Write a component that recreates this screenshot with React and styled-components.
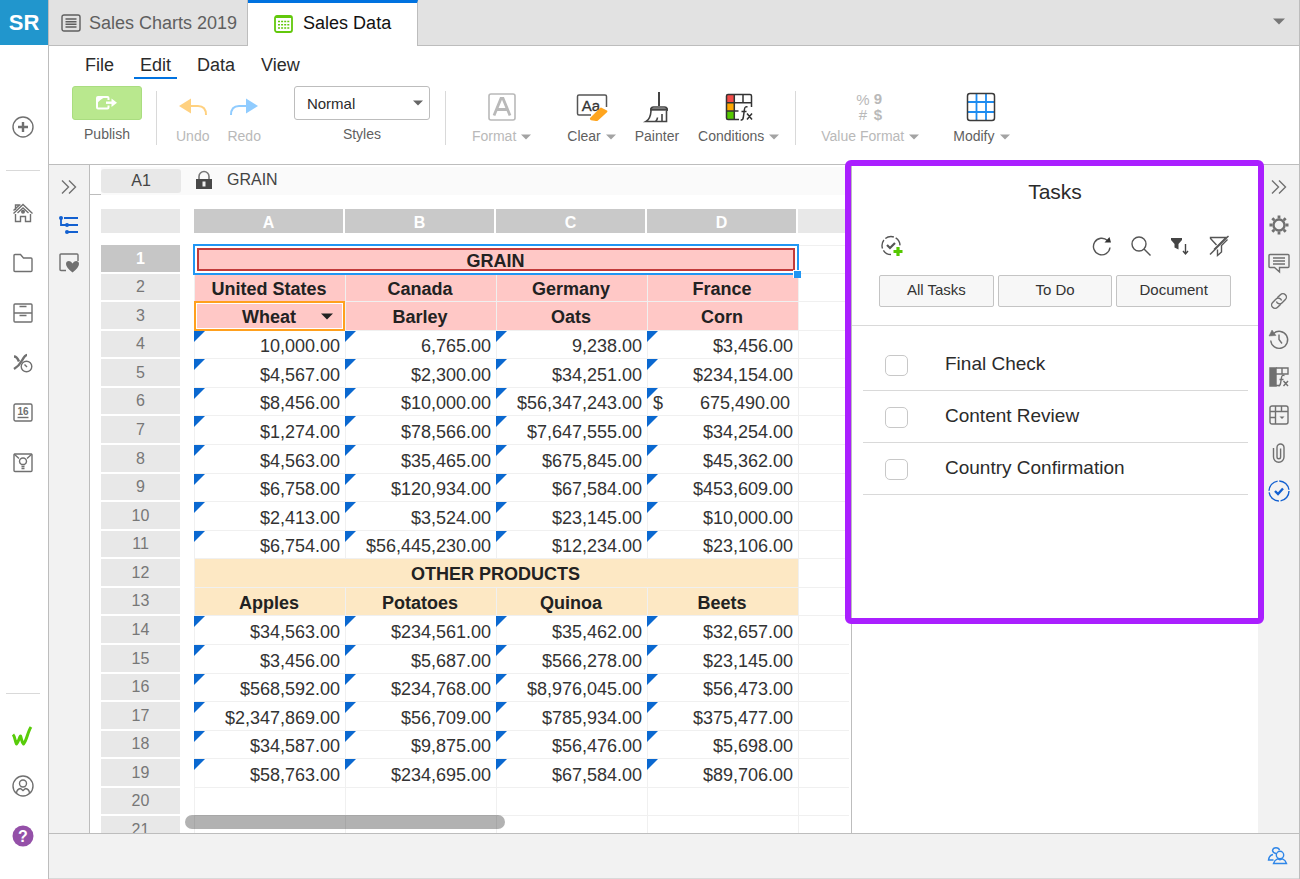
import React from "react";
import styled, { createGlobalStyle, css } from "styled-components";

/* =============== Theme =============== */
const colors = {
  text: "#2b2b2b",
  muted: "#5f5f5f",
  icon: "#707070",
  disabled: "#b9b9b9",
  line: "#bdbdbd",
  lightLine: "#d9d9d9",
  strip: "#f2f2f2",
  tabBar: "#e2e2e2",
  blue: "#0072e0",
  select: "#2196f3",
  pink: "#ffc8c6",
  cream: "#fde8c4",
  purple: "#aa1fff",
};

const GlobalStyle = createGlobalStyle`
  *, *::before, *::after { box-sizing: border-box; }
  body {
    margin: 0;
    background: #fff;
    color: ${colors.text};
    font-family: "Liberation Sans", Arial, sans-serif;
  }
  button, input, select { font-family: inherit; }
`;

/* =============== Shell =============== */
const Shell = styled.div`
  display: flex;
  height: 100vh;
  min-height: 600px;
  overflow: hidden;
`;

const Rail = styled.nav`
  display: flex;
  flex-direction: column;
  flex: 0 0 49px;
  align-items: flex-start;
  border-right: 1px solid ${colors.line};
  padding-bottom: 18px;
`;

const Logo = styled.a`
  display: grid;
  place-items: center;
  align-self: stretch;
  height: 45px;
  background: #2196cd;
  color: #fff;
  font-size: 22px;
  font-weight: 700;
  text-decoration: none;
`;

const RailButton = styled.button`
  display: grid;
  place-items: center;
  width: 46px;
  height: 50px;
  padding: 0;
  border: 0;
  background: none;
  color: ${colors.icon};
`;

const AddArea = styled.div`
  padding: 57px 0 18px;
`;

const RailLine = styled.hr`
  width: 34px;
  margin: 0 0 17px 6px;
  border: 0;
  border-top: 1px solid ${colors.lightLine};
`;

const Spacer = styled.div`
  flex: 1;
`;

const Main = styled.div`
  display: flex;
  flex-direction: column;
  flex: 1;
  min-width: 0;
  border-right: 1px solid ${colors.line};
`;

const Icon = styled.svg`
  display: block;
  fill: none;
  stroke: currentColor;
  stroke-width: ${(p) => p.$weight || 1.4};
  overflow: visible;
`;

/* =============== Tabs =============== */
const TabBar = styled.div`
  display: flex;
  flex: 0 0 46px;
  background: ${colors.tabBar};
  box-shadow: inset 0 -1px 0 ${colors.line};
`;

const Tab = styled.button`
  display: flex;
  align-items: center;
  gap: 8px;
  padding: 0 10px 0 12px;
  border: 0;
  border-right: 1px solid ${colors.line};
  background: none;
  color: ${colors.muted};
  font-size: 18px;

  ${(p) =>
    p.$active &&
    css`
      gap: 10px;
      padding: 0 26px 2px;
      border-top: 3px solid ${colors.blue};
      background: #fff;
      color: #111;
    `}
`;

const TabMenu = styled.button`
  margin-left: auto;
  padding: 0 14px 2px;
  border: 0;
  background: none;
  color: #777;
`;

/* =============== Ribbon =============== */
const Ribbon = styled.header`
  flex: 0 0 119px;
  border-bottom: 1px solid ${colors.line};
`;

const Menus = styled.div`
  display: flex;
  gap: 14px;
  padding-left: 30px;
`;

const Menu = styled.button`
  height: 33px;
  padding: 8px 6px 0;
  border: 0;
  border-bottom: 2px solid ${(p) => (p.$active ? colors.blue : "transparent")};
  background: none;
  color: ${colors.text};
  font-size: 18px;
`;

const Tools = styled.div`
  display: flex;
  align-items: flex-start;
  padding: 7px 0 0 23px;
`;

const Divider = styled.span`
  width: 1px;
  height: 54px;
  margin: 5px ${(p) => p.$after}px 0 ${(p) => p.$before}px;
  background: ${colors.lightLine};
`;

const Group = styled.div`
  display: flex;
  gap: ${(p) => p.$gap}px;
`;

const Labelled = styled.div`
  display: flex;
  flex-direction: column;
  align-items: center;
  gap: 5px;
  color: ${colors.muted};
  font-size: 14px;
  line-height: 18px;
`;

const PublishButton = styled.button`
  display: grid;
  place-items: center;
  width: 70px;
  height: 34px;
  padding: 0;
  border: 1px solid #aadd80;
  border-radius: 3px;
  background: #b9e88e;
  color: #fff;
`;

const SelectBox = styled.div`
  display: grid;
  grid-template-columns: 1fr 16px;
  align-items: center;
  width: 136px;
  height: 34px;
  border: 1px solid ${colors.line};
  border-radius: 3px;
  color: #666;
`;

const StyleSelect = styled.select`
  grid-area: 1 / 1 / 2 / 3;
  width: 100%;
  height: 100%;
  padding: 0 12px;
  border: 0;
  appearance: none;
  background: none;
  color: ${colors.text};
  font-size: 15px;
`;

const SelectCaret = styled.span`
  grid-area: 1 / 2;
  pointer-events: none;
`;

const Tool = styled.button`
  display: flex;
  flex-direction: column;
  align-items: center;
  padding: 0;
  border: 0;
  background: none;
  color: ${(p) => (p.disabled ? colors.disabled : colors.muted)};
  font-size: 14px;
  line-height: 18px;
`;

const ToolIcon = styled.span`
  display: grid;
  place-items: center;
  height: 41px;
`;

const ToolLabel = styled.span`
  display: flex;
  align-items: center;
  gap: 5px;
`;

const ToolCaret = styled.span`
  padding-top: 2px;
  color: #a3a3a3;
`;

/* =============== Workspace =============== */
const Workspace = styled.div`
  display: flex;
  flex: 1;
  min-height: 0;
`;

const SideStrip = styled.aside`
  display: flex;
  flex-direction: column;
  align-items: center;
  flex: 0 0 41px;
  padding-top: 3px;
  background: ${colors.strip};
  border-right: ${(p) => (p.$lined ? `1px solid ${colors.line}` : 0)};
`;

const StripButton = styled.button`
  display: grid;
  place-items: center;
  width: 40px;
  height: 38px;
  padding: 0;
  border: 0;
  background: none;
  color: ${(p) => (p.$active ? "#1260d0" : colors.icon)};
`;

const SheetArea = styled.main`
  position: relative;
  display: flex;
  flex-direction: column;
  flex: 1;
  min-width: 0;
  overflow: hidden;
`;

const FormulaBar = styled.div`
  display: flex;
  flex: 0 0 30px;
  margin-bottom: 14px;
`;

const FormulaStub = styled.div`
  flex: 0 0 11px;
  border-bottom: 1px solid ${colors.line};
`;

const FormulaBody = styled.div`
  display: flex;
  align-items: center;
  flex: 1;
  min-width: 0;
  margin-top: 2px;
  background: #fafafa;
  color: #444;
  font-size: 16px;
`;

const CellName = styled.span`
  width: 80px;
  margin-right: 15px;
  border-radius: 3px;
  background: #e8e8e8;
  line-height: 24px;
  text-align: center;
`;

const FormulaInput = styled.input`
  flex: 1;
  min-width: 0;
  padding: 0 0 2px;
  margin-left: 15px;
  border: 0;
  background: none;
  color: #444;
  font-size: 16px;
`;

const SheetScroll = styled.div`
  flex: 1;
  min-height: 0;
  margin: 0 2px 0 11px;
  overflow: hidden;
`;

const ScrollThumb = styled.div`
  position: absolute;
  left: 95px;
  bottom: 4px;
  width: 320px;
  height: 14px;
  border-radius: 7px;
  background: rgba(0, 0, 0, 0.3);
`;

/* =============== Grid =============== */
const Grid = styled.table`
  width: 100%;
  table-layout: fixed;
  border-collapse: separate;
  border-spacing: 0;
  font-size: 18px;
  line-height: 20px;

  tbody tr {
    height: 29px;
  }

  tbody tr:nth-child(7n + 2),
  tbody tr:nth-child(7n + 4),
  tbody tr:nth-child(7n + 6) {
    height: 28px;
  }
`;

const Col = styled.col`
  width: ${(p) => (p.$width ? `${p.$width}px` : "auto")};
`;

const ColumnHead = styled.th`
  height: 36px;
  padding: 0 2px 12px 0;
  background: ${(p) => (p.$on ? "#c9c9c9" : "#e8e8e8")};
  background-clip: content-box;
  color: #fff;
  font-size: 16px;
  vertical-align: bottom;
`;

const Corner = styled(ColumnHead)`
  padding-right: 14px;
`;

const RowHead = styled.th`
  padding: 0 14px 2px 0;
  background: ${(p) => (p.$on ? "#c6c6c6" : "#e8e8e8")};
  background-clip: content-box;
  color: ${(p) => (p.$on ? "#fff" : "#777")};
  font-size: 16px;
  font-weight: ${(p) => (p.$on ? 700 : 400)};
`;

const fills = {
  pink: css`
    background: ${colors.pink};
  `,
  cream: css`
    background: ${colors.cream};
  `,
};

const Cell = styled.td`
  position: relative;
  padding: 3px 5px 0;
  border: 0 solid #f0f0f0;
  border-width: 0 0 1px 1px;
  text-align: right;
  white-space: nowrap;
  color: #333;
  ${(p) => fills[p.$fill]}

  tr:first-child > & {
    border-top-width: 1px;
  }
`;

const TitleCell = styled(Cell)`
  padding: 2px 6px 0 4px;
  text-align: center;
  font-weight: 700;
  color: #222;
`;

const ValueCell = styled(Cell)`
  /* comment / formula marker */
  &::before {
    content: "";
    position: absolute;
    top: 0;
    left: -1px;
    width: 11px;
    height: 11px;
    background: #0a68d0;
    clip-path: polygon(0 0, 100% 0, 0 100%);
  }
`;

const Accounting = styled.span`
  display: flex;
  justify-content: space-between;
  padding-right: 3px;
`;

const Selection = styled.span`
  position: absolute;
  inset: -2px -1px -2px -2px;
  border: 2px solid ${colors.select};
  box-shadow: inset 0 0 0 2px #fff;
  z-index: 1;

  &::before {
    content: "";
    position: absolute;
    inset: 2px;
    border: 2px solid #c23b3b;
  }

  &::after {
    content: "";
    position: absolute;
    right: -4px;
    bottom: -5px;
    width: 8px;
    height: 8px;
    border: 1px solid #fff;
    border-width: 1px 0 0 1px;
    background: ${colors.select};
  }
`;

const Highlight = styled.span`
  position: absolute;
  inset: -1px 0 -1px -1px;
  border: 2px solid #ffa01e;
  box-shadow: inset 0 0 0 1px #fff;
  z-index: 1;
`;

const CellMenu = styled.button`
  position: absolute;
  top: 4px;
  right: 8px;
  z-index: 2;
  padding: 7px 4px;
  border: 0;
  background: none;
  color: #222;
`;

/* =============== Tasks =============== */
const TaskPanel = styled.section`
  position: relative;
  flex: 0 0 407px;
  border-left: 1px solid ${colors.line};
  background: #fff;
`;

const PanelFrame = styled.div`
  position: absolute;
  top: -5px;
  left: -7px;
  right: -6px;
  height: 464px;
  border: 6px solid ${colors.purple};
  border-radius: 6px;
  pointer-events: none;
  z-index: 3;
`;

const PanelTitle = styled.h2`
  margin: 0;
  padding-top: 15px;
  font-size: 21px;
  font-weight: 400;
  line-height: 24px;
  text-align: center;
`;

const PanelTools = styled.div`
  display: flex;
  align-items: center;
  gap: 14px;
  padding: 29px 27px 0;
`;

const PanelTool = styled.button`
  display: grid;
  place-items: center;
  width: 25px;
  height: 26px;
  padding: 0;
  border: 0;
  background: none;
  color: #555;

  &:first-child {
    margin-right: auto;
  }
`;

const Filters = styled.div`
  display: flex;
  gap: 4px;
  padding: 16px 27px 18px;
  border-bottom: 1px solid ${colors.lightLine};
`;

const FilterButton = styled.button`
  flex: 1;
  height: 32px;
  padding: 0 0 3px;
  border: 1px solid #c4c4c4;
  border-radius: 2px;
  background: #f7f7f7;
  color: #333;
  font-size: 15px;
`;

const TaskList = styled.ul`
  margin: 0;
  padding: 13px 10px 0 11px;
  list-style: none;
`;

const TaskRow = styled.li`
  display: flex;
  align-items: center;
  height: 52px;
  padding: 0 0 2px 22px;
  border-bottom: 1px solid ${colors.lightLine};
`;

const TaskCheck = styled.input`
  appearance: none;
  width: 23px;
  height: 21px;
  margin: 3px 37px 0 0;
  border: 1px solid #c8c8c8;
  border-radius: 5px;
  background: #fff;
`;

const TaskLabel = styled.label`
  font-size: 19px;
  line-height: 24px;
`;

const StatusBar = styled.footer`
  display: flex;
  justify-content: flex-end;
  align-items: center;
  flex: 0 0 46px;
  padding-right: 11px;
  border-top: 1px solid ${colors.line};
  border-bottom: 1px solid ${colors.lightLine};
  background: ${colors.strip};
  color: #2f86e8;
`;

/* =============== Icons =============== */
const Caret = ({ w = 10 }) => (
  <Icon width={w} height={w * 0.6} viewBox="0 0 10 6" aria-hidden>
    <path d="M0 0.5h10L5 5.5z" fill="currentColor" stroke="none" />
  </Icon>
);

const Chevrons = () => (
  <Icon width="16" height="16" viewBox="0 0 16 16" aria-hidden>
    <path d="M1 1.5l6.5 6.5L1 14.5M8 1.5l6.5 6.5L8 14.5" />
  </Icon>
);

const railIcons = [
  {
    label: "Home",
    art: (
      <>
        <path d="M.5 10.500L10 1.500l9.500 9" />
        <path d="M2.500 11v7.500h5v-5h5v5h5V11" />
        <path d="M4.500 10L10 5l5.500 5M2.500 7V2h5M.5 7.500L6.500 2" />
        <circle cx="10" cy="8.700" r="1.300" fill="currentColor" />
      </>
    ),
  },
  { label: "Files", art: <path d="M1 17.500V2.500q0-1 1-1h5.500l3 3.500H18q1 0 1 1v11.500q0 1-1 1H2q-1 0-1-1z" /> },
  {
    label: "Records",
    art: (
      <>
        <rect x="1" y="1" width="18" height="18" rx="1" />
        <path d="M1 10h18M6.500 3.500h7M6.500 12.500h7" />
      </>
    ),
  },
  {
    label: "Scheduled",
    art: (
      <>
        <path d="M1 3.500q3 0 5 5M14 2q-2 0-5 5.500T1 16" strokeWidth="2.400" />
        <circle cx="13.500" cy="13.500" r="5.300" fill="#fff" />
        <path d="M11.500 11.500l2.500 2.500" />
      </>
    ),
  },
  {
    label: "Calendar",
    art: (
      <>
        <rect x="1" y="1" width="18" height="17" rx="1.500" />
        <path d="M4.500 14.500h11" />
        <text x="10" y="12" fontSize="10" fontWeight="700" textAnchor="middle" fill="currentColor" stroke="none">16</text>
      </>
    ),
  },
  {
    label: "Insights",
    art: (
      <>
        <rect x="1" y="1" width="18" height="17.500" rx="1" />
        <path d="M1 1l5 4.500M19 1l-5 4.500M8.500 13.500h3M8.500 15.500h3" />
        <path d="M8.500 11.500q-2-1.200-2-3a3.500 3.500 0 0 1 7 0q0 1.800-2 3z" />
      </>
    ),
  },
];

const stripIcons = [
  { label: "Collapse", art: <path d="M3 3.500l6.500 6.500L3 16.500M10 3.500l6.500 6.500-6.500 6.500" /> },
  {
    label: "Settings",
    art: (
      <>
        <circle cx="10" cy="10" r="5.500" strokeWidth="2.400" />
        <path d="M10 .5v3M10 16.500v3M.5 10h3M16.500 10h3M3.300 3.300l2 2M14.700 14.700l2 2M16.700 3.300l-2 2M5.300 14.700l-2 2" strokeWidth="2.800" />
      </>
    ),
  },
  {
    label: "Comments",
    art: (
      <>
        <path d="M1 1.500h18q1 0 1 1v11q0 1-1 1h-8.500V19l-5-4.500H1q-1 0-1-1v-11q0-1 1-1z" />
        <path d="M4 5h12M4 8h12M4 11h12" />
      </>
    ),
  },
  {
    label: "Links",
    art: (
      <g transform="rotate(-45 10 10)">
        <path d="M9 13.500H4.500a3.500 3.500 0 0 1 0-7H9a3.500 3.500 0 0 1 3.200 5" />
        <path d="M11 6.500h4.500a3.500 3.500 0 0 1 0 7H11a3.500 3.500 0 0 1-3.200-5" />
      </g>
    ),
  },
  {
    label: "History",
    art: (
      <>
        <path d="M4.500 4.500a8.500 8.500 0 1 1-2.800 7" />
        <path d="M0 7L3 1l4 5.500z" fill="currentColor" strokeWidth="0.500" />
        <path d="M10 5.500v5l3 4" />
      </>
    ),
  },
  {
    label: "Formulas",
    art: (
      <>
        <path d="M1 1h6v18H1z" fill="currentColor" />
        <path d="M7 1h12v6H7M13 1v6M7 18.500h4" />
        <path d="M15.500 8.500q-2.500-1-3 2l-1 6q-.5 2.500-2 2M10.500 12.500h4M14.500 14l4.500 5M19 14l-4.500 5" />
      </>
    ),
  },
  {
    label: "Sheet fields",
    art: (
      <>
        <rect x="1" y="1" width="18" height="18" rx="2" />
        <path d="M1 6.500h18M6.500 1v18M12.500 1v5.500M1 12.500h5.500" />
        <path d="M10.500 11.500h5l-2.500 2.500z" fill="currentColor" stroke="none" />
      </>
    ),
  },
  {
    label: "Attachments",
    art: <path d="M4.500 5v9a5 5 0 0 0 10.500 0V4.500a3.500 3.500 0 0 0-7 0v9.500a1.800 1.800 0 0 0 3.600 0V5.500" />,
  },
  {
    label: "Tasks",
    active: true,
    art: (
      <>
        <circle cx="10" cy="10" r="10" strokeDasharray="14 1.700" />
        <path d="M6 10l3 3 5-5.500" strokeWidth="2.400" />
      </>
    ),
  },
];

/* =============== Data =============== */
const columns = ["A", "B", "C", "D"];

const rows = [
  { type: "title", fill: "pink", selected: true, text: "GRAIN" },
  { type: "heads", fill: "pink", cells: ["United States", "Canada", "Germany", "France"] },
  { type: "heads", fill: "pink", cells: ["Wheat", "Barley", "Oats", "Corn"], menu: true },
  { cells: ["10,000.00", "6,765.00", "9,238.00", "$3,456.00"] },
  { cells: ["$4,567.00", "$2,300.00", "$34,251.00", "$234,154.00"] },
  { cells: ["$8,456.00", "$10,000.00", "$56,347,243.00", ["$", "675,490.00"]] },
  { cells: ["$1,274.00", "$78,566.00", "$7,647,555.00", "$34,254.00"] },
  { cells: ["$4,563.00", "$35,465.00", "$675,845.00", "$45,362.00"] },
  { cells: ["$6,758.00", "$120,934.00", "$67,584.00", "$453,609.00"] },
  { cells: ["$2,413.00", "$3,524.00", "$23,145.00", "$10,000.00"] },
  { cells: ["$6,754.00", "$56,445,230.00", "$12,234.00", "$23,106.00"] },
  { type: "title", fill: "cream", text: "OTHER PRODUCTS" },
  { type: "heads", fill: "cream", cells: ["Apples", "Potatoes", "Quinoa", "Beets"] },
  { cells: ["$34,563.00", "$234,561.00", "$35,462.00", "$32,657.00"] },
  { cells: ["$3,456.00", "$5,687.00", "$566,278.00", "$23,145.00"] },
  { cells: ["$568,592.00", "$234,768.00", "$8,976,045.00", "$56,473.00"] },
  { cells: ["$2,347,869.00", "$56,709.00", "$785,934.00", "$375,477.00"] },
  { cells: ["$34,587.00", "$9,875.00", "$56,476.00", "$5,698.00"] },
  { cells: ["$58,763.00", "$234,695.00", "$67,584.00", "$89,706.00"] },
  { type: "empty", cells: ["", "", "", ""] },
  { type: "empty", cells: ["", "", "", ""] },
];

const tasks = ["Final Check", "Content Review", "Country Confirmation"];

/* =============== Components =============== */
const LeftRail = () => (
  <Rail aria-label="Workspace">
    <Logo href="#home">SR</Logo>
    <AddArea>
      <RailButton aria-label="Create">
        <Icon width="22" height="22" viewBox="0 0 22 22">
          <circle cx="11" cy="11" r="10" />
          <path d="M11 6v10M6 11h10" strokeWidth="2.400" />
        </Icon>
      </RailButton>
    </AddArea>
    <RailLine />
    {railIcons.map(({ label, art }) => (
      <RailButton key={label} aria-label={label}>
        <Icon width="20" height="20" viewBox="0 0 20 20">{art}</Icon>
      </RailButton>
    ))}
    <Spacer />
    <RailLine />
    <RailButton aria-label="Product home">
      <Icon width="22" height="20" viewBox="0 0 22 20">
        <path d="M1 8.500c2 2 2 7 3.500 9.500 2-2 2.500-6 4-8 1 2 1 6 3 8 3.500-4 4-12 7.500-17" stroke="#58cc0a" strokeWidth="3" strokeLinejoin="round" />
      </Icon>
    </RailButton>
    <RailButton aria-label="Account">
      <Icon width="22" height="22" viewBox="0 0 22 22">
        <circle cx="11" cy="11" r="10" />
        <circle cx="11" cy="8.500" r="3.500" />
        <path d="M4.500 18q.5-4 4-4.500l2.500 2 2.500-2q3.500.5 4 4.500" />
      </Icon>
    </RailButton>
    <RailButton aria-label="Help">
      <Icon width="22" height="22" viewBox="0 0 22 22">
        <circle cx="11" cy="11" r="10.500" fill="#9450a8" stroke="none" />
        <text x="11" y="16.500" fontSize="16" fontWeight="700" textAnchor="middle" fill="#fff" stroke="none">?</text>
      </Icon>
    </RailButton>
  </Rail>
);

const Tabs = () => (
  <TabBar role="tablist">
    <Tab role="tab">
      <Icon width="20" height="18" viewBox="0 0 20 18">
        <rect x="1" y="1" width="18" height="16" rx="2" />
        <path d="M4.500 5h11M4.500 7.700h11M4.500 10.300h11M4.500 13h11" />
      </Icon>
      Sales Charts 2019
    </Tab>
    <Tab role="tab" aria-selected $active>
      <Icon width="19" height="18" viewBox="0 0 19 18" $weight={1.8}>
        <rect x="1" y="1" width="17" height="16" rx="2" stroke="#62c80c" />
        <path d="M1 2h17" stroke="#62c80c" strokeWidth="2" />
        <path d="M4 6.500h11.500M4 9.700h11.500M4 13h11.500" stroke="#62c80c" strokeWidth="1.500" strokeDasharray="2 1.100" />
      </Icon>
      Sales Data
    </Tab>
    <TabMenu aria-label="More tabs">
      <Caret w={12} />
    </TabMenu>
  </TabBar>
);

const RibbonTool = ({ label, caret, disabled, children }) => (
  <Tool disabled={disabled}>
    <ToolIcon>{children}</ToolIcon>
    <ToolLabel>
      {label}
      {caret && (
        <ToolCaret>
          <Caret />
        </ToolCaret>
      )}
    </ToolLabel>
  </Tool>
);

const RibbonBar = () => (
  <Ribbon>
    <Menus>
      {["File", "Edit", "Data", "View"].map((name) => (
        <Menu key={name} $active={name === "Edit"}>{name}</Menu>
      ))}
    </Menus>
    <Tools>
      <Labelled>
        <PublishButton aria-labelledby="publish-label">
          <Icon width="22" height="14" viewBox="0 0 22 14">
            <path d="M12.500 4V2q0-1-1-1H2Q1 1 1 2v9.500q0 1 1 1h9.500q1 0 1-1V9.500" strokeWidth="2" />
            <path d="M1 12V7.500q4-5 8-6H1z" fill="currentColor" stroke="none" />
            <path d="M10 6.700h7" strokeWidth="2.400" />
            <path d="M15.500 2.500L21 6.700l-5.500 4.300z" fill="currentColor" stroke="none" />
          </Icon>
        </PublishButton>
        <span id="publish-label">Publish</span>
      </Labelled>
      <Divider $before={14} $after={19} />
      <Group $gap={33}>
        <Group $gap={18}>
          <RibbonTool label="Undo" disabled>
            <Icon width="30" height="20" viewBox="0 0 30 20" $weight={2}>
              <path d="M1 9L13 1.500v15z" fill="#ffd180" stroke="none" />
              <path d="M12 9h8q8 0 8 9" stroke="#ffd180" />
            </Icon>
          </RibbonTool>
          <RibbonTool label="Redo" disabled>
            <Icon width="30" height="20" viewBox="0 0 30 20" $weight={2}>
              <path d="M29 9L17 1.500v15z" fill="#90ccff" stroke="none" />
              <path d="M18 9h-8q-8 0-8 9" stroke="#90ccff" />
            </Icon>
          </RibbonTool>
        </Group>
        <Labelled>
          <SelectBox>
            <StyleSelect id="cell-style" defaultValue="Normal">
              <option>Normal</option>
              <option>Heading</option>
            </StyleSelect>
            <SelectCaret>
              <Caret />
            </SelectCaret>
          </SelectBox>
          <label htmlFor="cell-style">Styles</label>
        </Labelled>
      </Group>
      <Divider $before={15} $after={26} />
      <Group $gap={36}>
        <RibbonTool label="Format" caret disabled>
          <Icon width="28" height="28" viewBox="0 0 28 28" $weight={1.6}>
            <rect x="1" y="1" width="26" height="26" rx="2" />
            <path d="M6 22.500L13 5.500h2l7 17M8.500 16.500h11" strokeWidth="2.800" />
          </Icon>
        </RibbonTool>
        <Group $gap={19}>
          <RibbonTool label="Clear" caret>
            <Icon width="32" height="28" viewBox="0 0 32 28" $weight={1.5}>
              <path d="M15 22H3q-1.500 0-1.500-1.500v-17Q1.500 2 3 2h26q1.500 0 1.500 1.500V14" stroke="#555" />
              <text x="15" y="17.500" fontSize="15" textAnchor="middle" fill="#333" stroke="#333" strokeWidth="0.300">Aa</text>
              <path d="M15 24l9-9q1-.8 2 0l5 2.500q1 .8 0 1.800l-9 8.200q-.8.700-2 .5l-5-.8q-2.300-1.200 0-3.200z" fill="#ffa51e" stroke="none" />
            </Icon>
          </RibbonTool>
          <RibbonTool label="Painter">
            <Icon width="24" height="32" viewBox="0 0 24 32" $weight={1.6}>
              <path d="M14 1v14" stroke="#444" strokeWidth="2" />
              <path d="M6 20v-1.500Q6 16 8.500 16h11q2.500 0 2.500 2.500V20" stroke="#444" />
              <path d="M5 18.500h18" stroke="#444" strokeWidth="2.400" />
              <path d="M6 20q-.5 8-5 10.500h20.500V20M10.500 30.500q2-2 2-4M17 30v-7" stroke="#444" />
            </Icon>
          </RibbonTool>
          <RibbonTool label="Conditions" caret>
            <Icon width="28" height="28" viewBox="0 0 28 28" $weight={1.5}>
              <path d="M2 2h7v8H2z" fill="#f44b48" stroke="none" />
              <path d="M2 10h7v8H2z" fill="#ffa800" stroke="none" />
              <path d="M2 18h7v8H2z" fill="#55c800" stroke="none" />
              <path d="M14 26.500H3q-1.500 0-1.500-1.500V3Q1.500 1.500 3 1.500h22q1.500 0 1.500 1.500v11M1.500 9.800h25M9.300 1.500v25M18 1.500v8M1.500 18h12" stroke="#333" />
              <path d="M22.500 14q-2.500-1-3 2l-1.300 9q-.5 2.500-2.500 1.700M16.500 18.500h5M22 20.500l5 6M27 20.500l-5 6" stroke="#333" />
            </Icon>
          </RibbonTool>
        </Group>
      </Group>
      <Divider $before={16} $after={25} />
      <Group $gap={34}>
        <RibbonTool label="Value Format" caret disabled>
          <Icon width="28" height="30" viewBox="0 0 28 30" $weight={1.5}>
            <g fill="currentColor" stroke="none" fontSize="15" textAnchor="middle">
              <text x="7" y="13">%</text>
              <text x="22" y="12" fontWeight="700">9</text>
              <text x="7" y="28">#</text>
              <text x="22" y="28" fontWeight="700">$</text>
            </g>
          </Icon>
        </RibbonTool>
        <RibbonTool label="Modify" caret>
          <Icon width="30" height="30" viewBox="0 0 30 30" $weight={1.5}>
            <path d="M1.500 10h27M1.500 20h27M10.500 1.500v27M20 1.500v27" stroke="#1e8cf0" strokeWidth="1.800" />
            <rect x="1.500" y="1.500" width="27" height="27" rx="2.500" stroke="#3b3b3b" />
          </Icon>
        </RibbonTool>
      </Group>
    </Tools>
  </Ribbon>
);

const SheetRow = ({ row, index }) => (
  <tr>
    <RowHead scope="row" $on={row.selected}>{index + 1}</RowHead>
    {row.type === "title" ? (
      <TitleCell colSpan={4} $fill={row.fill}>
        {row.text}
        {row.selected && <Selection />}
      </TitleCell>
    ) : (
      row.cells.map((value, i) => {
        if (row.type === "empty") return <Cell key={i} />;
        if (row.type === "heads") {
          return (
            <TitleCell key={i} $fill={row.fill}>
              {value}
              {row.menu && i === 0 && (
                <>
                  <Highlight />
                  <CellMenu aria-label="Choose grain">
                    <Caret w={12} />
                  </CellMenu>
                </>
              )}
            </TitleCell>
          );
        }
        return (
          <ValueCell key={i}>
            {Array.isArray(value) ? (
              <Accounting>
                <span>{value[0]}</span>
                <span>{value[1]}</span>
              </Accounting>
            ) : (
              value
            )}
          </ValueCell>
        );
      })
    )}
    <Cell />
  </tr>
);

const Sheet = () => (
  <SheetArea>
    <FormulaBar>
      <FormulaStub />
      <FormulaBody>
        <CellName>A1</CellName>
        <Icon width="16" height="20" viewBox="0 0 16 20" aria-hidden>
          <path d="M3 8V5.500a5 5 0 0 1 10 0V8" stroke="#777" strokeWidth="1.600" />
          <path d="M0 8h16v10H0z" fill="#484848" stroke="none" />
          <path d="M6.500 10.500h3v5h-3z" fill="#eee" stroke="none" />
        </Icon>
        <FormulaInput aria-label="Cell value" defaultValue="GRAIN" />
      </FormulaBody>
    </FormulaBar>
    <SheetScroll>
      <Grid>
        <colgroup>
          <Col $width={93} />
          {columns.map((c) => (
            <Col key={c} $width={151} />
          ))}
          <Col />
        </colgroup>
        <thead>
          <tr>
            <Corner as="td" />
            {columns.map((c) => (
              <ColumnHead key={c} scope="col" $on>{c}</ColumnHead>
            ))}
            <ColumnHead as="td" />
          </tr>
        </thead>
        <tbody>
          {rows.map((row, i) => (
            <SheetRow key={i} row={row} index={i} />
          ))}
        </tbody>
      </Grid>
    </SheetScroll>
    <ScrollThumb />
  </SheetArea>
);

const Tasks = () => (
  <TaskPanel>
    <PanelFrame />
    <PanelTitle>Tasks</PanelTitle>
    <PanelTools>
      <PanelTool aria-label="Add task">
        <Icon width="22" height="22" viewBox="0 0 22 22">
          <path d="M10 19.500a9 9 0 1 1 9-9" strokeDasharray="9 2" />
          <path d="M6 10l3 3 5-5" strokeWidth="2.200" />
          <path d="M17 12v9M12.500 16.500h9" stroke="#55c800" strokeWidth="3.200" />
        </Icon>
      </PanelTool>
      <PanelTool aria-label="Refresh">
        <Icon width="20" height="20" viewBox="0 0 20 20">
          <path d="M15.500 4.500a8.300 8.300 0 1 0 2.500 7" />
          <path d="M19 6.500h-6.500L17.500 1z" fill="#333" stroke="none" />
        </Icon>
      </PanelTool>
      <PanelTool aria-label="Search">
        <Icon width="20" height="20" viewBox="0 0 20 20">
          <circle cx="8" cy="8" r="7" />
          <path d="M13 13l6.500 6.500" />
        </Icon>
      </PanelTool>
      <PanelTool aria-label="Sort">
        <Icon width="18" height="18" viewBox="0 0 18 18">
          <path d="M0 1h11v2L7.500 7v5.500l-4-2V7L0 3z" fill="#444" stroke="none" />
          <path d="M14.500 7v9.500M12 14l2.500 3 2.500-3" stroke="#444" />
        </Icon>
      </PanelTool>
      <PanelTool aria-label="Clear filter">
        <Icon width="20" height="20" viewBox="0 0 20 20">
          <path d="M1 18.500L19.500 0" />
          <path d="M5 13.500L17 1.500H1.500v1l6 6.500M18.500 3.500l-6 6v6.500l-4 3.500v-6" />
        </Icon>
      </PanelTool>
    </PanelTools>
    <Filters>
      <FilterButton>All Tasks</FilterButton>
      <FilterButton>To Do</FilterButton>
      <FilterButton>Document</FilterButton>
    </Filters>
    <TaskList>
      {tasks.map((name, i) => (
        <TaskRow key={name}>
          <TaskCheck type="checkbox" id={`task-${i}`} />
          <TaskLabel htmlFor={`task-${i}`}>{name}</TaskLabel>
        </TaskRow>
      ))}
    </TaskList>
  </TaskPanel>
);

const App = () => (
  <>
    <GlobalStyle />
    <Shell>
      <LeftRail />
      <Main>
        <Tabs />
        <RibbonBar />
        <Workspace>
          <SideStrip $lined>
            <StripButton aria-label="Expand">
              <Chevrons />
            </StripButton>
            <StripButton aria-label="Outline" $active>
              <Icon width="20" height="18" viewBox="0 0 20 18" $weight={1.8}>
                <path d="M5 2h14M9 9h10M9 16h10M2 2v7h5" />
                <g fill="currentColor" stroke="none">
                  <circle cx="2" cy="2" r="2" />
                  <circle cx="8" cy="9" r="2" />
                  <circle cx="8" cy="16" r="2" />
                </g>
              </Icon>
            </StripButton>
            <StripButton aria-label="Favorites">
              <Icon width="20" height="20" viewBox="0 0 20 20">
                <path d="M7 17.500H2q-1 0-1-1V2q0-1 1-1h16q1 0 1 1v6" />
                <path d="M13.500 19.500q-6.500-5-6.500-8.500 0-3 3-3 2.300 0 3.500 2.500Q14.700 8 17 8q3 0 3 3 0 3.500-6.500 8.500z" fill="currentColor" stroke="none" />
              </Icon>
            </StripButton>
          </SideStrip>
          <Sheet />
          <Tasks />
          <SideStrip>
            {stripIcons.map(({ label, active, art }) => (
              <StripButton key={label} aria-label={label} $active={active}>
                <Icon width="20" height="20" viewBox="0 0 20 20">{art}</Icon>
              </StripButton>
            ))}
          </SideStrip>
        </Workspace>
        <StatusBar>
          <Icon width="20" height="18" viewBox="0 0 20 18" role="img" aria-label="Collaborators">
            <circle cx="12" cy="8" r="3.700" />
            <path d="M5.500 16.500q1-3.500 4-4.700l2.500 1 2.500-1q3 1.200 4 4.700z" />
            <path d="M8 6.500q-3-.5-3.500-3Q5 .7 8 .7t3.500 2.500M5 7.500q-4 1-4.500 5.500h5" />
          </Icon>
        </StatusBar>
      </Main>
    </Shell>
  </>
);

export default App;
